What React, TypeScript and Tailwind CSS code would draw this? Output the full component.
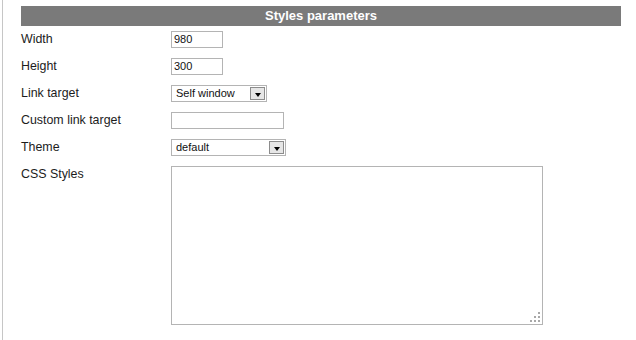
const fieldFont = { fontFamily: '"Liberation Sans", Arial, sans-serif' };

function TextBox({ value, width }: { value?: string; width: string }) {
  return (
    <div className={`${width} h-[17px] border border-[#b4b4b4] bg-white pl-[2px] text-[11px] leading-[15px] text-[#111]`}>
      {value}
    </div>
  );
}

function SelectBox({ value, width }: { value: string; width: string }) {
  return (
    <div className={`${width} h-[17px] border border-[#b4b4b4] bg-white flex items-center justify-between pl-[4px] pr-[1px] text-[11px] leading-[15px] text-[#111]`}>
      <span>{value}</span>
      <div className="w-[15px] h-[13px] border border-[#8c8c8c] bg-[#e6e6e6] flex items-center justify-center">
        <div className="w-0 h-0 border-l-[3.5px] border-r-[3.5px] border-t-[4px] border-l-transparent border-r-transparent border-t-black mt-[2px]" />
      </div>
    </div>
  );
}

function Row({ label, children }: { label: string; children: React.ReactNode }) {
  return (
    <div className="flex items-start mt-[10px] first:mt-[5px]">
      <div className="w-[150px] h-[17px] leading-[17px] text-[12.4px] text-[#1c1c1c]">{label}</div>
      {children}
    </div>
  );
}

export default function App() {
  return (
    <div className="w-[636px] h-[340px] bg-white pl-[2px]" style={fieldFont}>
      <div className="h-full border-l border-[#c6c6c6] pl-[18px] pt-[6px]">
        <div className="w-[600px] h-[20px] bg-[#7a7a7a] text-white text-[13px] font-bold text-center leading-[20px]">
          Styles parameters
        </div>

        <div>
          <Row label="Width">
            <TextBox value="980" width="w-[52px]" />
          </Row>
          <Row label="Height">
            <TextBox value="300" width="w-[52px]" />
          </Row>
          <Row label="Link target">
            <SelectBox value="Self window" width="w-[96px]" />
          </Row>
          <Row label="Custom link target">
            <TextBox width="w-[113px]" />
          </Row>
          <Row label="Theme">
            <SelectBox value="default" width="w-[115px]" />
          </Row>
          <Row label="CSS Styles">
            <div className="relative w-[372px] h-[159px]">
              <textarea className="w-full h-full border border-[#b4b4b4] bg-white resize-none outline-none" />
              <div className="absolute right-[3px] bottom-[3px] grid grid-cols-3 gap-[2px]">
                <span className="w-[2px] h-[2px]" />
                <span className="w-[2px] h-[2px]" />
                <span className="w-[2px] h-[2px] bg-[#a8a8a8]" />
                <span className="w-[2px] h-[2px]" />
                <span className="w-[2px] h-[2px] bg-[#a8a8a8]" />
                <span className="w-[2px] h-[2px] bg-[#a8a8a8]" />
                <span className="w-[2px] h-[2px] bg-[#a8a8a8]" />
                <span className="w-[2px] h-[2px] bg-[#a8a8a8]" />
                <span className="w-[2px] h-[2px] bg-[#a8a8a8]" />
              </div>
            </div>
          </Row>
        </div>
      </div>
    </div>
  );
}
